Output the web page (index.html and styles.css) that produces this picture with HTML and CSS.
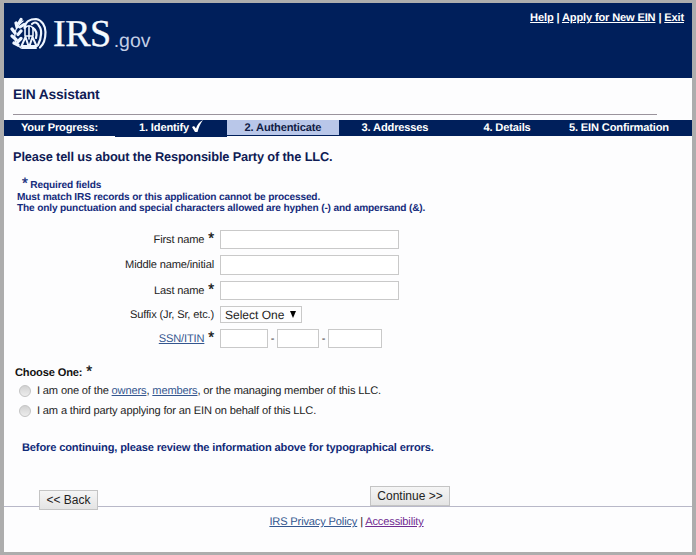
FILE: index.html
```html
<!DOCTYPE html>
<html lang="en">
<head>
<meta charset="utf-8">
<title>EIN Assistant</title>
<link rel="stylesheet" href="styles.css">
</head>
<body>
<div class="page">
  <header class="banner">
    <div class="logo">
      <svg class="eagle" viewBox="0 0 37 34" fill="none" stroke="#eef5ff" stroke-linecap="round">
        <path stroke-width="1.3" d="M11 31C6 28 4 22 5 16C6 10 9 7 13 4"/>
        <path stroke-width="3.2" d="M2 12l3 4M2 19l4 3.500M4 26l4 2M6 6l1 4M11 2.500l-2 3.500M14 7.500l-4 2.500M11 14l-3 3.500M11 21.500l-3 3"/>
        <path stroke-width="2.2" d="M14.500 11C15 5 20 2 26 2C32 3 35.500 9 35.500 15C35.500 21 34 27 30 30.500M22 7C25 4 28 6 29 9C32 12 32 20 28 28M23 11C26 13 27 17 26 21"/>
        <path stroke-width="1.6" d="M15 11c2-3 6-3 8 0v8M15 11v8M19 10v12M15 19h8"/>
        <path stroke-width="2" d="M15.500 20l-4 9h7l-3-9M22.500 20l-3 9h7l-4-9M12 31h14"/>
      </svg>
      <span class="irs">IRS</span><span class="gov">.gov</span>
    </div>
    <nav class="toplinks"><a href="#">Help</a> | <a href="#">Apply for New EIN</a> | <a href="#">Exit</a></nav>
  </header>
  <h1 class="title">EIN Assistant</h1>
  <hr class="rule">
  <ol class="progress">
    <li class="step lead">Your Progress:</li>
    <li class="step done">1. Identify <svg class="check" viewBox="0 0 11 12"><path d="M0 7L2 6L4 8.500C5 5 7 2 11 0C8 4 6.500 8 5.500 12H3Z" fill="#fff"/></svg></li>
    <li class="step active">2. Authenticate</li>
    <li class="step">3. Addresses</li>
    <li class="step">4. Details</li>
    <li class="step">5. EIN Confirmation</li>
  </ol>
  <h2 class="question">Please tell us about the Responsible Party of the LLC.</h2>
  <div class="notes">
    <p class="required"><span class="star">*</span> Required fields</p>
    <p class="note">Must match IRS records or this application cannot be processed.</p>
    <p class="note second">The only punctuation and special characters allowed are hyphen (-) and ampersand (&amp;).</p>
  </div>
  <form>
    <div class="fields">
      <label class="label" for="first">First name <span class="star">*</span></label><input class="box" id="first">
      <label class="label" for="middle">Middle name/initial</label><input class="box tall" id="middle">
      <label class="label" for="last">Last name <span class="star">*</span></label><input class="box" id="last">
      <label class="label suffix">Suffix (Jr, Sr, etc.)</label><div class="select"><span>Select One</span><svg class="arrow" viewBox="0 0 6 7"><path d="M0 0h6L3 7z"/></svg></div>
      <label class="label" for="ssn"><a href="#">SSN/ITIN</a> <span class="star">*</span></label>
      <div class="ssn"><input class="box area" id="ssn"><span>-</span><input class="box group"><span>-</span><input class="box serial"></div>
    </div>
    <p class="choose">Choose One: <span class="star">*</span></p>
    <label class="choice"><i class="radio"></i><span class="member">I am one of the <a href="#">owners</a>, <a href="#">members</a>, or the managing member of this LLC.</span></label>
    <label class="choice"><i class="radio"></i><span class="third">I am a third party applying for an EIN on behalf of this LLC.</span></label>
    <p class="review">Before continuing, please review the information above for typographical errors.</p>
    <div class="actions">
      <button class="button back" type="button">&lt;&lt; Back</button>
      <button class="button next" type="button">Continue &gt;&gt;</button>
    </div>
  </form>
  <footer class="footer"><a href="#">IRS Privacy Policy</a> | <a class="visited" href="#">Accessibility</a></footer>
</div>
</body>
</html>
```
FILE: styles.css
```css
* { box-sizing: border-box; }
body { margin: 0; background: #adadad; font: 11.1px/14px "Liberation Sans", Arial, sans-serif; letter-spacing: -0.155px; color: #222; text-rendering: geometricPrecision; }
h1, h2, p, ol { margin: 0; padding: 0; }
a { color: #34568f; }
.page { height: 555px; border: solid #adadad; border-width: 3px 4px; background: #fdfdfe; white-space: nowrap; overflow: hidden; }
.banner { height: 75px; background: #001f5b; color: #fff; display: flex; justify-content: space-between; }
.logo { display: flex; align-items: flex-start; padding: 14px 0 0 6px; }
.eagle { width: 37px; height: 34px; }
.irs { font: 38px/38px "Liberation Serif", serif; letter-spacing: -0.5px; margin: -2px 0 0 6px; color: #f6faff; -webkit-text-stroke: 0.4px #f6faff; }
.gov { font-size: 19.5px; line-height: 22px; letter-spacing: 0; margin: 13px 0 0 3px; color: #c3cee5; }
.toplinks { font-weight: bold; padding: 8px 8px 0 0; }
.toplinks a { color: #fff; }
.title { font-size: 13.8px; line-height: 18px; color: #101c55; margin: 8px 0 0 9px; }
.rule { width: 644px; height: 1px; border: 0; background: #9a939c; margin: 10px 0 5px 9px; }
.progress { display: grid; grid-template-columns: 111px 112px 112px 112px 112px 112px 17px; height: 16px; background: #001f5b; list-style: none; color: #fff; font-weight: bold; text-align: center; }
.step { line-height: 16px; height: 16px; }
.done { height: 17px; background: #001f5b; line-height: 17px; }
.check { width: 11px; height: 12px; vertical-align: -1px; }
.active { height: 15px; background: #b9c7e9; color: #101c45; }
.question { font-size: 12.8px; line-height: 16px; color: #101c55; margin: 13px 0 0 9px; }
.notes { margin: 14px 0 0 13px; color: #152c7c; font-weight: bold; font-size: 10.15px; line-height: 11px; }
.required { line-height: 13px; padding-left: 5px; }
.star { font-size: 15px; line-height: 1px; color: #111; -webkit-text-stroke: 0.3px; font-weight: normal; margin-left: 1px; }
.notes .star { color: #152c7c; margin-left: 0; }
.fields { display: grid; grid-template-columns: 210px auto; grid-template-rows: 25px 26px 25px 23px 20px; column-gap: 6px; margin-top: 16px; }
.label { text-align: right; line-height: 20px; }
.suffix { line-height: 18px; }
.box { width: 179px; height: 19px; border: 1px solid #c9c9c9; background: #fff; padding: 0; display: block; }
.tall { height: 20px; }
.select { width: 82px; height: 17px; border: 1px solid #c9c9c9; font-size: 12px; line-height: 16px; letter-spacing: 0; display: flex; align-items: center; justify-content: space-between; padding: 0 5px 0 4px; }
.arrow { width: 6px; height: 7px; }
.ssn { display: flex; }
.ssn span { width: 9px; text-align: center; line-height: 20px; }
.area { width: 48px; }
.group { width: 42px; }
.serial { width: 54px; }
.choose { font-weight: bold; color: #111; margin: 17px 0 1px 11px; }
.choice { display: flex; align-items: center; height: 20px; padding-left: 15px; gap: 6px; }
.radio { width: 12px; height: 12px; border: 1px solid #c4c4c4; border-radius: 50%; background: linear-gradient(#d2d2d2, #ededed); }
.review { font-weight: bold; color: #102a78; margin: 20px 0 0 18px; }
.actions { display: flex; align-items: flex-start; height: 52px; padding-left: 35px; border-bottom: 1px solid #b8b8c8; }
.button { height: 20px; border: 1px solid #c4c4c4; border-radius: 0; background: linear-gradient(#f5f5f5, #e4e4e4); padding: 0; font: 12px/18px "Liberation Sans", Arial, sans-serif; color: #222; }
.back { width: 59px; margin-top: 35px; }
.next { width: 80px; margin: 31px 0 0 272px; }
.footer { text-align: center; margin: 8px 3px 0 0; }
.footer .visited { color: #702b91; }
```
